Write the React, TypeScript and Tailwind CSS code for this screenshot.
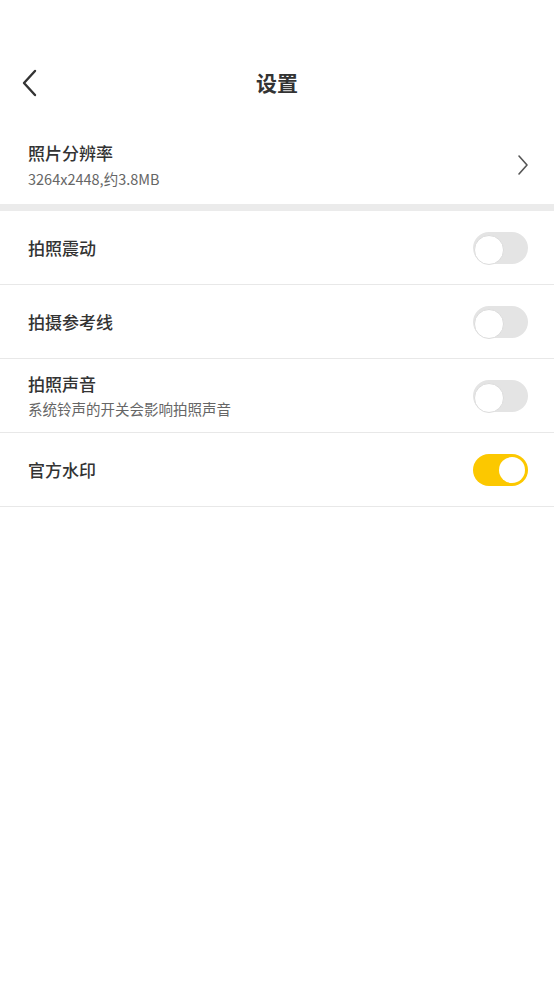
import { useState } from 'react';

const font = { fontFamily: '"Noto Sans CJK SC", "Noto Sans", sans-serif' };

function Toggle({ on, onClick }: { on: boolean; onClick: () => void }) {
  return (
    <button
      onClick={onClick}
      className={`relative w-[55px] h-[32px] rounded-full shrink-0 ${on ? 'bg-[#fcc800]' : 'bg-[#e4e4e4]'}`}
    >
      <span
        className={`absolute top-[3px] w-[26px] h-[26px] rounded-full bg-white ${
          on ? 'left-[26px]' : 'left-[1px] top-[1px] w-[30px] h-[30px] border border-[#dcdcdc]'
        }`}
      />
    </button>
  );
}

interface Item {
  title: string;
  sub?: string;
  key: string;
}

const items: Item[] = [
  { key: 'vibrate', title: '拍照震动' },
  { key: 'grid', title: '拍摄参考线' },
  { key: 'sound', title: '拍照声音', sub: '系统铃声的开关会影响拍照声音' },
  { key: 'watermark', title: '官方水印' },
];

export default function App() {
  const [state, setState] = useState<Record<string, boolean>>({
    vibrate: false, grid: false, sound: false, watermark: true,
  });

  return (
    <div className="w-[554px] h-[984px] bg-white text-[#333] pt-[50px] overflow-hidden" style={font}>
      <header className="relative h-[66px] flex items-center justify-center">
        <button className="absolute left-[20px] top-[19px] text-[#333]">
          <svg width="20" height="28" viewBox="0 0 20 28" fill="none" stroke="currentColor" strokeWidth="2.4" strokeLinecap="round" strokeLinejoin="round">
            <path d="M15 2 L4 14 L15 26" />
          </svg>
        </button>
        <h1 className="text-[21px] font-bold leading-none -mt-[1px]">设置</h1>
      </header>

      <div className="flex items-center justify-between pl-[28px] pr-[24px] pt-[24px] pb-[14px]">
        <div className="flex flex-col">
          <span className="text-[17px] font-medium leading-[26px]">照片分辨率</span>
          <span className="text-[14.5px] text-[#666] leading-[22px] mt-[2px]">3264x2448,约3.8MB</span>
        </div>
        <svg width="14" height="22" viewBox="0 0 14 22" fill="none" stroke="#555" strokeWidth="1.6" strokeLinecap="round" strokeLinejoin="round">
          <path d="M3 2 L11 11 L3 20" />
        </svg>
      </div>

      <div className="h-[7px] bg-[#ebebeb]" />

      {items.map((it) => (
        <div key={it.key} className="h-[74px] flex items-center justify-between pl-[28px] pr-[26px] border-b border-[#e8e8e8]">
          <div className="flex flex-col">
            <span className="text-[17px] font-medium leading-[26px]">{it.title}</span>
            {it.sub && <span className="text-[14.5px] text-[#666] leading-[22px] mt-[1px]">{it.sub}</span>}
          </div>
          <Toggle on={state[it.key]} onClick={() => setState({ ...state, [it.key]: !state[it.key] })} />
        </div>
      ))}
    </div>
  );
}
